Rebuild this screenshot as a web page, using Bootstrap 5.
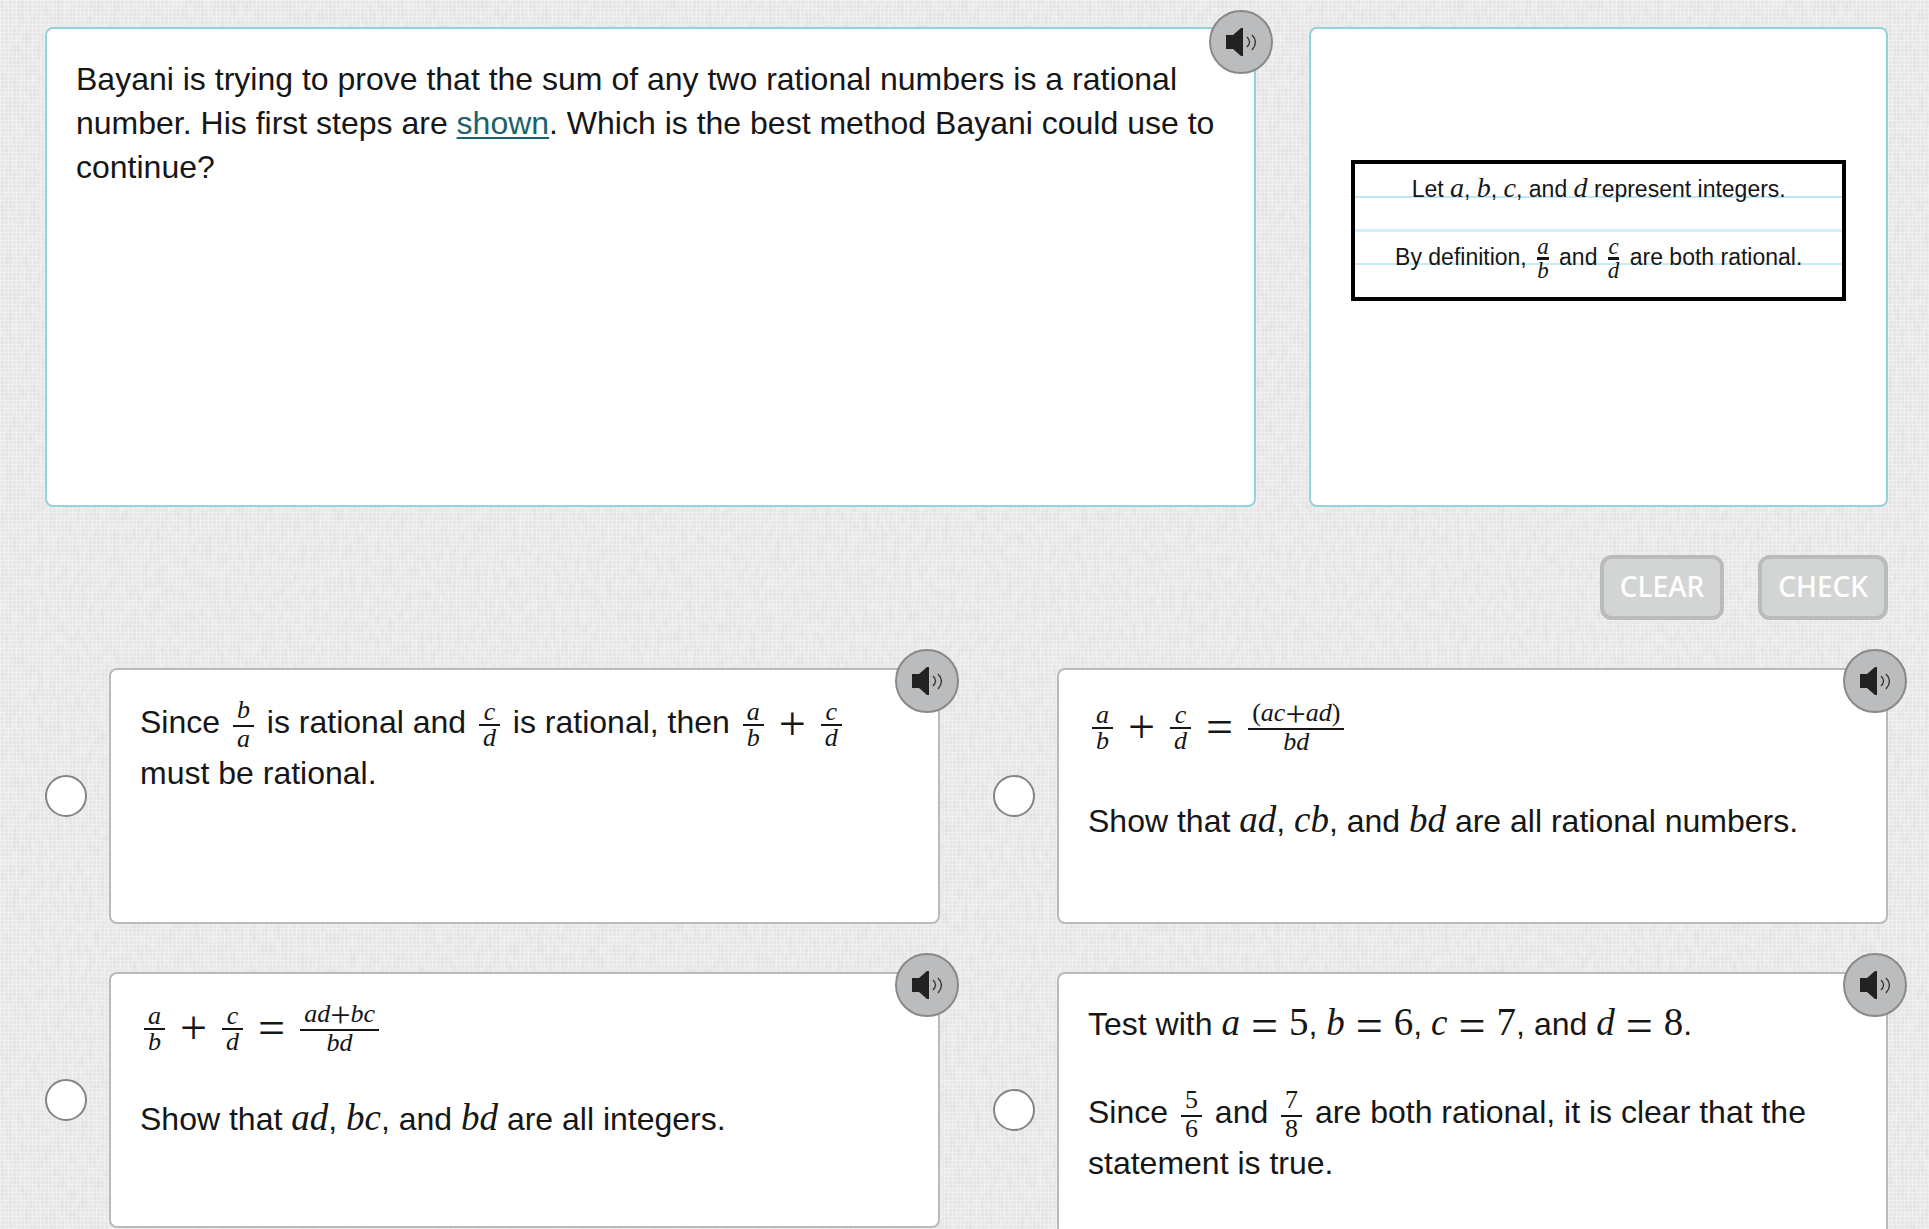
<!DOCTYPE html>
<html lang="en">
<head>
<meta charset="utf-8">
<meta name="viewport" content="width=device-width, initial-scale=1">
<title>Rational number proof</title>
<link href="https://cdn.jsdelivr.net/npm/bootstrap@5.3.0/dist/css/bootstrap.min.css" rel="stylesheet">
<style>
  body { background: #e9e9e9; color: #161616; font: 32px/44px "Liberation Sans", Arial, sans-serif; }
  .weave { z-index: -1; }
  .page { padding: 27px 41px 48px 45px; }
  .top-grid { display: grid; grid-template-columns: 67fr 32fr; column-gap: 53px; min-height: 480px; }
  .panel { position: relative; background: #fff; border: 2px solid #b9babb; border-radius: 8px; padding: 28px 29px; }
  .panel-teal { border-color: #93d3d9; }
  .panel a { color: #1b626b; text-decoration-thickness: 2px; text-underline-offset: 3px; }

  .audio { position: absolute; top: -21px; right: -21px; width: 64px; height: 64px; padding: 0; border: 2px solid #88898a; border-radius: 50%; background: #bbbcbd; }
  .audio svg { display: block; width: 60px; height: 60px; }
  .panel-teal .audio { top: -19px; right: -19px; }

  .note { margin: 103px 11px 0; border: 4px solid #000; padding: 8px 0 16px; font-size: 23px; line-height: 34px; text-align: center;
    background: linear-gradient(#bfe6f3 0 0) 0 32px / 100% 2px no-repeat, linear-gradient(#d0effa 0 0) 0 65px / 100% 3px no-repeat, linear-gradient(#c6eaf6 0 0) 0 99px / 100% 2px no-repeat, #fff; }
  .note p + p { margin-top: 30px; }

  .actions { gap: 34px; padding: 48px 0; }
  .action { height: 65px; padding: 0 16px 4px; border: 4px solid #b9bbbc; border-radius: 12px; background: #d3d5d5; color: #fff; font: 500 28px/40px "Noto Sans", sans-serif; }

  .answers { display: grid; grid-template-columns: 1fr 1fr; gap: 48px 53px; align-items: start; }
  .answer { gap: 22px; }
  .pick { appearance: none; flex: none; width: 42px; height: 42px; margin: 0; border: 2px solid #838485; border-radius: 50%; background: #fff; }
  .pick:checked { box-shadow: inset 0 0 0 9px #fff; background: #1b626b; }
  .answer .panel { min-height: 256px; }
  .para + .para { margin-top: 42px; }
  .spare { padding-bottom: 33px; }

  .mi, .mn { font-family: "Liberation Serif", "Times New Roman", serif; font-size: 37px; line-height: 1px; }
  .mn { font-size: 39px; }
  .mi, .frac i { font-style: italic; }
  .mo { font-family: "Liberation Serif", serif; font-size: 48px; line-height: 1px; vertical-align: -7px; margin: 0 11px; }
  .frac { display: inline-flex; flex-direction: column; vertical-align: middle; margin: 0 4px; text-align: center; font: 26px/24px "Liberation Serif", serif; }
  .frac > span { padding: 0 4px; }
  .frac > span + span { border-top: 2px solid #161616; }
  .frac-tall > span:first-child { padding-bottom: 3px; }
  .frac-paren { margin-top: 3px; margin-bottom: 3px; }
  .plus { font-size: 36px; line-height: 1px; vertical-align: -5px; }
  .note .mi { font-size: 28px; }
  .note .frac { font-size: 23px; line-height: 21px; }
  .note .frac > span { padding: 0; }
  .note .frac > span + span { border-top-width: 3px; }
</style>
<script src="https://cdn.jsdelivr.net/npm/bootstrap@5.3.0/dist/js/bootstrap.bundle.min.js"></script>
</head>
<body class="vh-100 overflow-hidden">

<svg class="weave position-fixed top-0 start-0 w-100 h-100" aria-hidden="true">
  <defs>
    <filter id="grain" x="0" y="0" width="100%" height="100%">
      <feTurbulence type="fractalNoise" baseFrequency="0.16 0.09" numOctaves="3" seed="4"/>
      <feColorMatrix values="0 0 0 0 0.5  0 0 0 0 0.5  0 0 0 0 0.5  0.35 0 0 0 -0.12"/>
    </filter>
    <pattern id="threads" width="4" height="4" patternUnits="userSpaceOnUse">
      <path d="M0 0.5H4M0.5 0V4" stroke="#fff" stroke-opacity="0.25"/>
    </pattern>
  </defs>
  <rect width="100%" height="100%" fill="#eaeaea"/>
  <rect width="100%" height="100%" filter="url(#grain)"/>
  <rect width="100%" height="100%" fill="url(#threads)"/>
</svg>

<svg class="d-none" aria-hidden="true">
  <symbol id="speaker" viewBox="0 0 60 60">
    <path d="M15 23h7l8-7h2v28h-2l-8-7h-7z" fill="#222"/>
    <path d="M36 25q5 5 0 10M41 23q7 7 0 15" fill="none" stroke="#333" stroke-width="1.3"/>
  </symbol>
</svg>

<main class="page">
  <section class="top-grid">
    <div class="panel panel-teal">
      <p class="m-0">Bayani is trying to prove that the sum of any two rational numbers is a rational number. His first steps are <a href="#note">shown</a>. Which is the best method Bayani could use to continue?</p>
      <button type="button" class="audio" aria-label="Listen to the question"><svg><use href="#speaker"/></svg></button>
    </div>
    <div class="panel panel-teal">
      <div class="note" id="note">
        <p class="mb-0">Let <span class="mi">a</span>, <span class="mi">b</span>, <span class="mi">c</span>, and <span class="mi">d</span> represent integers.</p>
        <p class="mb-0">By definition, <span class="frac"><span><i>a</i></span><span><i>b</i></span></span> and <span class="frac"><span><i>c</i></span><span><i>d</i></span></span> are both rational.</p>
      </div>
    </div>
  </section>

  <div class="actions d-flex justify-content-end">
    <button type="button" class="action">CLEAR</button>
    <button type="button" class="action">CHECK</button>
  </div>

  <form class="answers">
    <div class="answer d-flex align-items-center">
      <input class="pick" type="radio" name="answer" id="a1">
      <div class="panel flex-grow-1">
        <label for="a1" class="d-block">
          <span class="para d-block">Since <span class="frac frac-tall"><span><i>b</i></span><span><i>a</i></span></span> is rational and <span class="frac"><span><i>c</i></span><span><i>d</i></span></span> is rational, then <span class="frac"><span><i>a</i></span><span><i>b</i></span></span><span class="mo">+</span><span class="frac"><span><i>c</i></span><span><i>d</i></span></span> must be rational.</span>
        </label>
        <button type="button" class="audio" aria-label="Listen to answer 1"><svg><use href="#speaker"/></svg></button>
      </div>
    </div>

    <div class="answer d-flex align-items-center">
      <input class="pick" type="radio" name="answer" id="a2">
      <div class="panel flex-grow-1">
        <label for="a2" class="d-block">
          <span class="para d-block"><span class="frac"><span><i>a</i></span><span><i>b</i></span></span><span class="mo">+</span><span class="frac"><span><i>c</i></span><span><i>d</i></span></span><span class="mo">=</span><span class="frac frac-tall frac-paren"><span>(<i>ac</i><span class="plus">+</span><i>ad</i>)</span><span><i>bd</i></span></span></span>
          <span class="para d-block">Show that <span class="mi">ad</span>, <span class="mi">cb</span>, and <span class="mi">bd</span> are all rational numbers.</span>
        </label>
        <button type="button" class="audio" aria-label="Listen to answer 2"><svg><use href="#speaker"/></svg></button>
      </div>
    </div>

    <div class="answer d-flex align-items-center">
      <input class="pick" type="radio" name="answer" id="a3">
      <div class="panel flex-grow-1">
        <label for="a3" class="d-block">
          <span class="para d-block"><span class="frac"><span><i>a</i></span><span><i>b</i></span></span><span class="mo">+</span><span class="frac"><span><i>c</i></span><span><i>d</i></span></span><span class="mo">=</span><span class="frac frac-tall"><span><i>ad</i><span class="plus">+</span><i>bc</i></span><span><i>bd</i></span></span></span>
          <span class="para d-block">Show that <span class="mi">ad</span>, <span class="mi">bc</span>, and <span class="mi">bd</span> are all integers.</span>
        </label>
        <button type="button" class="audio" aria-label="Listen to answer 3"><svg><use href="#speaker"/></svg></button>
      </div>
    </div>

    <div class="answer d-flex align-items-center">
      <input class="pick" type="radio" name="answer" id="a4">
      <div class="panel flex-grow-1">
        <label for="a4" class="d-block">
          <span class="para d-block">Test with <span class="mi">a</span><span class="mo">=</span><span class="mn">5</span>, <span class="mi">b</span><span class="mo">=</span><span class="mn">6</span>, <span class="mi">c</span><span class="mo">=</span><span class="mn">7</span>, and <span class="mi">d</span><span class="mo">=</span><span class="mn">8</span>.</span>
          <span class="para spare d-block">Since <span class="frac frac-tall"><span>5</span><span>6</span></span> and <span class="frac frac-tall"><span>7</span><span>8</span></span> are both rational, it is clear that the statement is true.</span>
        </label>
        <button type="button" class="audio" aria-label="Listen to answer 4"><svg><use href="#speaker"/></svg></button>
      </div>
    </div>
  </form>
</main>
</body>
</html>
